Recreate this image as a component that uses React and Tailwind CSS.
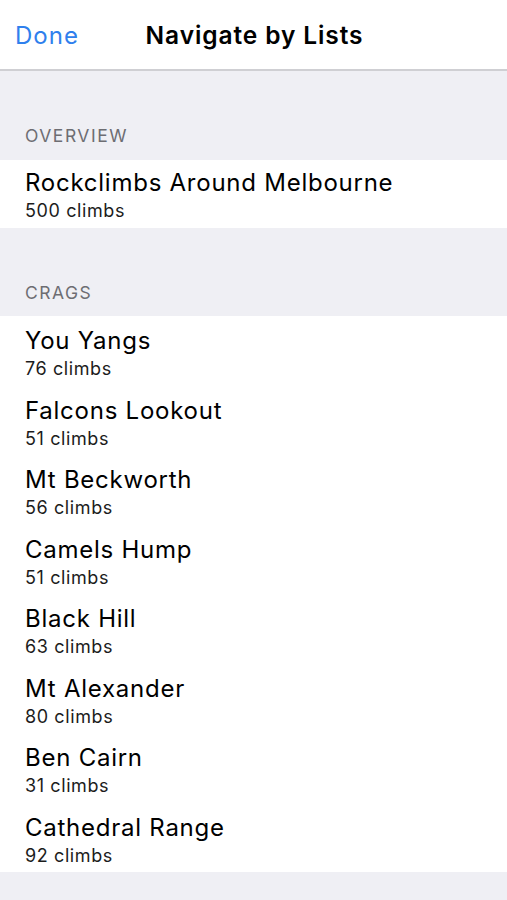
const crags = [
  { name: 'You Yangs', count: 76 },
  { name: 'Falcons Lookout', count: 51 },
  { name: 'Mt Beckworth', count: 56 },
  { name: 'Camels Hump', count: 51 },
  { name: 'Black Hill', count: 63 },
  { name: 'Mt Alexander', count: 80 },
  { name: 'Ben Cairn', count: 31 },
  { name: 'Cathedral Range', count: 92 },
]

const SectionHeader = ({ title, height, pb }) => (
  <div className={`flex items-end px-[25px] ${pb} ${height}`}>
    <span className="text-[17.5px] leading-5 text-[#6d6d72] tracking-[1.5px]">{title}</span>
  </div>
)

const Row = ({ name, count, height, pt }) => (
  <div className={`px-[25px] bg-white ${pt} ${height}`}>
    <div className="text-[24px] leading-[30px] text-black tracking-[0.75px]">{name}</div>
    <div className="text-[18px] leading-[25px] text-[#1c1c1c] tracking-[0.6px]">{count} climbs</div>
  </div>
)

export default function App() {
  return (
    <div
      className="w-[507px] h-[900px] overflow-hidden bg-[#efeff4]"
      style={{ fontFamily: 'Inter, "Liberation Sans", Arial, sans-serif' }}
    >
      <header className="relative h-[71px] bg-white border-b-2 border-[#cfcfd3] flex items-center justify-center">
        <button className="absolute left-[15px] top-[19px] text-[24px] leading-[34px] text-[#2f80ed] tracking-[1px]">Done</button>
        <h1 className="text-[24.5px] leading-[34px] font-semibold text-black tracking-[0.9px] mt-[1px] ml-[2px]">Navigate by Lists</h1>
      </header>

      <SectionHeader title="OVERVIEW" height="h-[89px]" pb="pb-[14px]" />
      <Row name="Rockclimbs Around Melbourne" count={500} height="h-[68px]" pt="pt-[8px]" />

      <SectionHeader title="CRAGS" height="h-[88px]" pb="pb-[13px]" />
      <div className="bg-white">
        {crags.map((c) => (
          <Row key={c.name} name={c.name} count={c.count} height="h-[69.5px]" pt="pt-[10px]" />
        ))}
      </div>
    </div>
  )
}
